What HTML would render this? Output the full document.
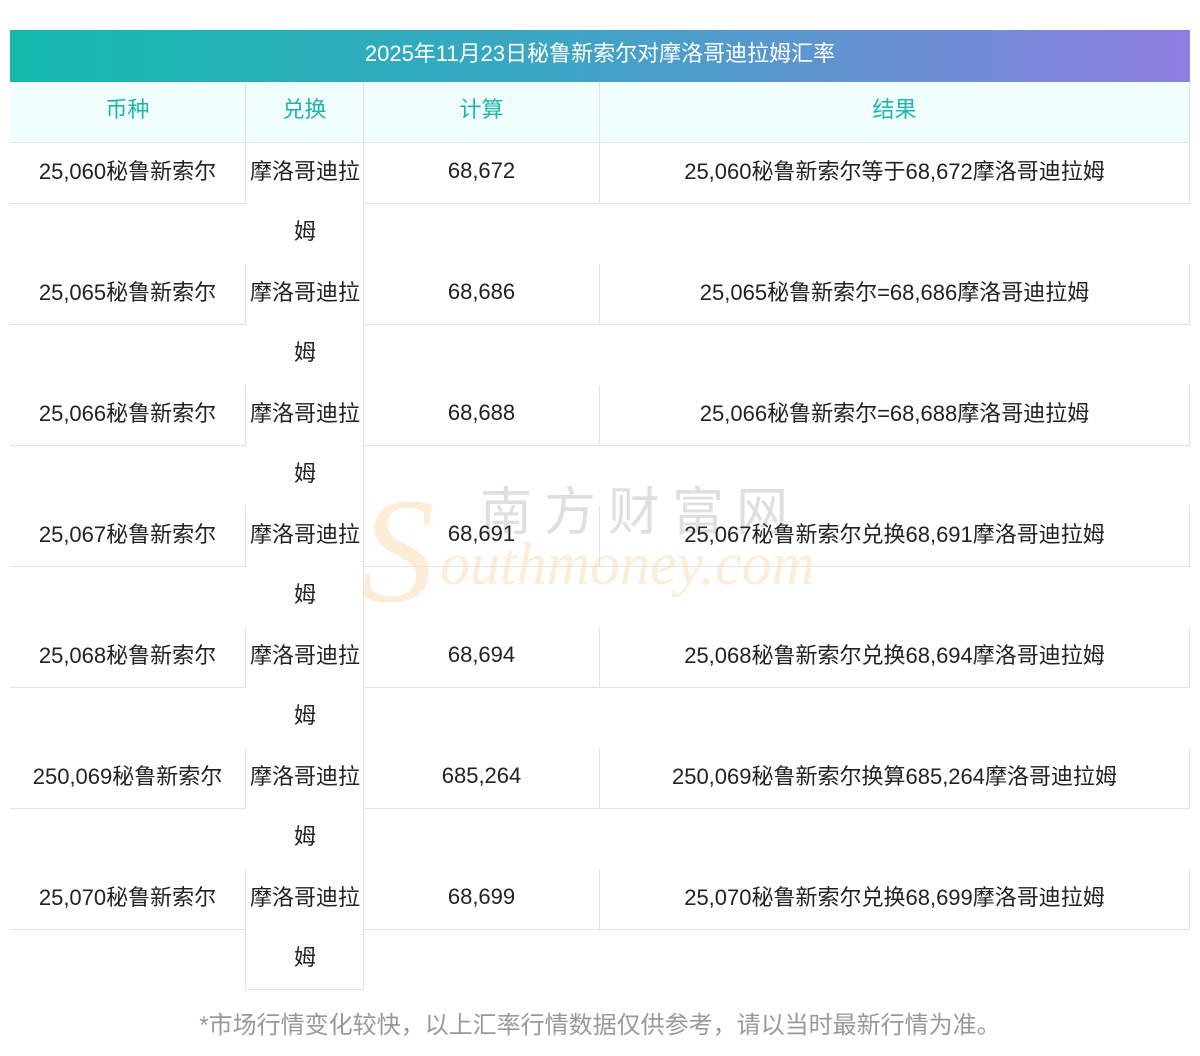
<!DOCTYPE html>
<html><head><meta charset="utf-8"><style>
body{margin:0;width:1200px;height:1056px;background:#fff;position:relative;font-family:"Liberation Sans","Noto Sans CJK SC",sans-serif;overflow:hidden}
.a{position:absolute;box-sizing:border-box;display:flex;align-items:center;justify-content:center;font-size:22px;color:#222;padding-bottom:7px;white-space:nowrap}
.n{padding-bottom:4px}
.title{left:10px;top:30px;width:1180px;height:52px;background:linear-gradient(90deg,#13b9ab,#3aa6c4 45%,#8f7ee0);color:#fff;font-size:22px;padding-bottom:9px}
.h{top:82px;height:61px;background:#f0fefe;color:#1fb5ac;border-right:1px solid #e2e3ea;border-bottom:1px solid #e2e3ea;font-size:22px;padding-bottom:8px}
.c{height:61px;border-bottom:1px solid #e2e3ea;border-right:1px solid #e2e3ea}
.v{width:1px;background:#e2e3ea;position:absolute}
.wm{position:absolute;font-family:"Liberation Serif","Noto Serif CJK SC",serif;font-style:italic}
</style></head><body>
<div class="a title">2025年11月23日秘鲁新索尔对摩洛哥迪拉姆汇率</div>
<div class="a h" style="left:10px;width:236px">币种</div>
<div class="a h" style="left:246px;width:118px">兑换</div>
<div class="a h" style="left:364px;width:236px">计算</div>
<div class="a h" style="left:600px;width:590px">结果</div>
<div class="wm" style="left:360px;top:465px;font-size:150px;color:rgba(250,200,140,0.35);font-style:italic">S</div>
<div class="wm" style="left:480px;top:470px;font-size:52px;color:rgba(150,150,150,0.3);letter-spacing:12px;font-style:normal;font-family:'Noto Sans CJK SC',sans-serif">南方财富网</div>
<div class="wm" style="left:440px;top:530px;font-size:60px;color:rgba(250,200,140,0.35)">outhmoney.com</div>
<div id="rows"></div>
<div class="a" style="left:0;top:1006px;width:1200px;height:40px;color:#999;font-size:24px">*市场行情变化较快，以上汇率行情数据仅供参考，请以当时最新行情为准。</div>
<script>
var d=[["25,060秘鲁新索尔","68,672","25,060秘鲁新索尔等于68,672摩洛哥迪拉姆"],["25,065秘鲁新索尔","68,686","25,065秘鲁新索尔=68,686摩洛哥迪拉姆"],["25,066秘鲁新索尔","68,688","25,066秘鲁新索尔=68,688摩洛哥迪拉姆"],["25,067秘鲁新索尔","68,691","25,067秘鲁新索尔兑换68,691摩洛哥迪拉姆"],["25,068秘鲁新索尔","68,694","25,068秘鲁新索尔兑换68,694摩洛哥迪拉姆"],["250,069秘鲁新索尔","685,264","250,069秘鲁新索尔换算685,264摩洛哥迪拉姆"],["25,070秘鲁新索尔","68,699","25,070秘鲁新索尔兑换68,699摩洛哥迪拉姆"]];
var h="";d.forEach(function(r,i){var t=143+i*121;
h+='<div class="a c" style="left:10px;top:'+t+'px;width:236px">'+r[0]+'</div>';
h+='<div class="a" style="left:246px;top:'+t+'px;width:118px;height:60px">摩洛哥迪拉</div>';
h+='<div class="a" style="left:246px;top:'+(t+60)+'px;width:118px;height:61px">姆</div>';
h+='<div class="v" style="left:363px;top:'+t+'px;height:121px"></div>';
h+='<div class="a c n" style="left:364px;top:'+t+'px;width:236px">'+r[1]+'</div>';
h+='<div class="a c" style="left:600px;top:'+t+'px;width:590px">'+r[2]+'</div>';
});
h+='<div class="v" style="left:245px;top:929px;height:61px"></div><div style="position:absolute;left:245px;top:989px;width:119px;height:1px;background:#e2e3ea"></div>';
document.getElementById("rows").innerHTML=h;
</script>
</body></html>
